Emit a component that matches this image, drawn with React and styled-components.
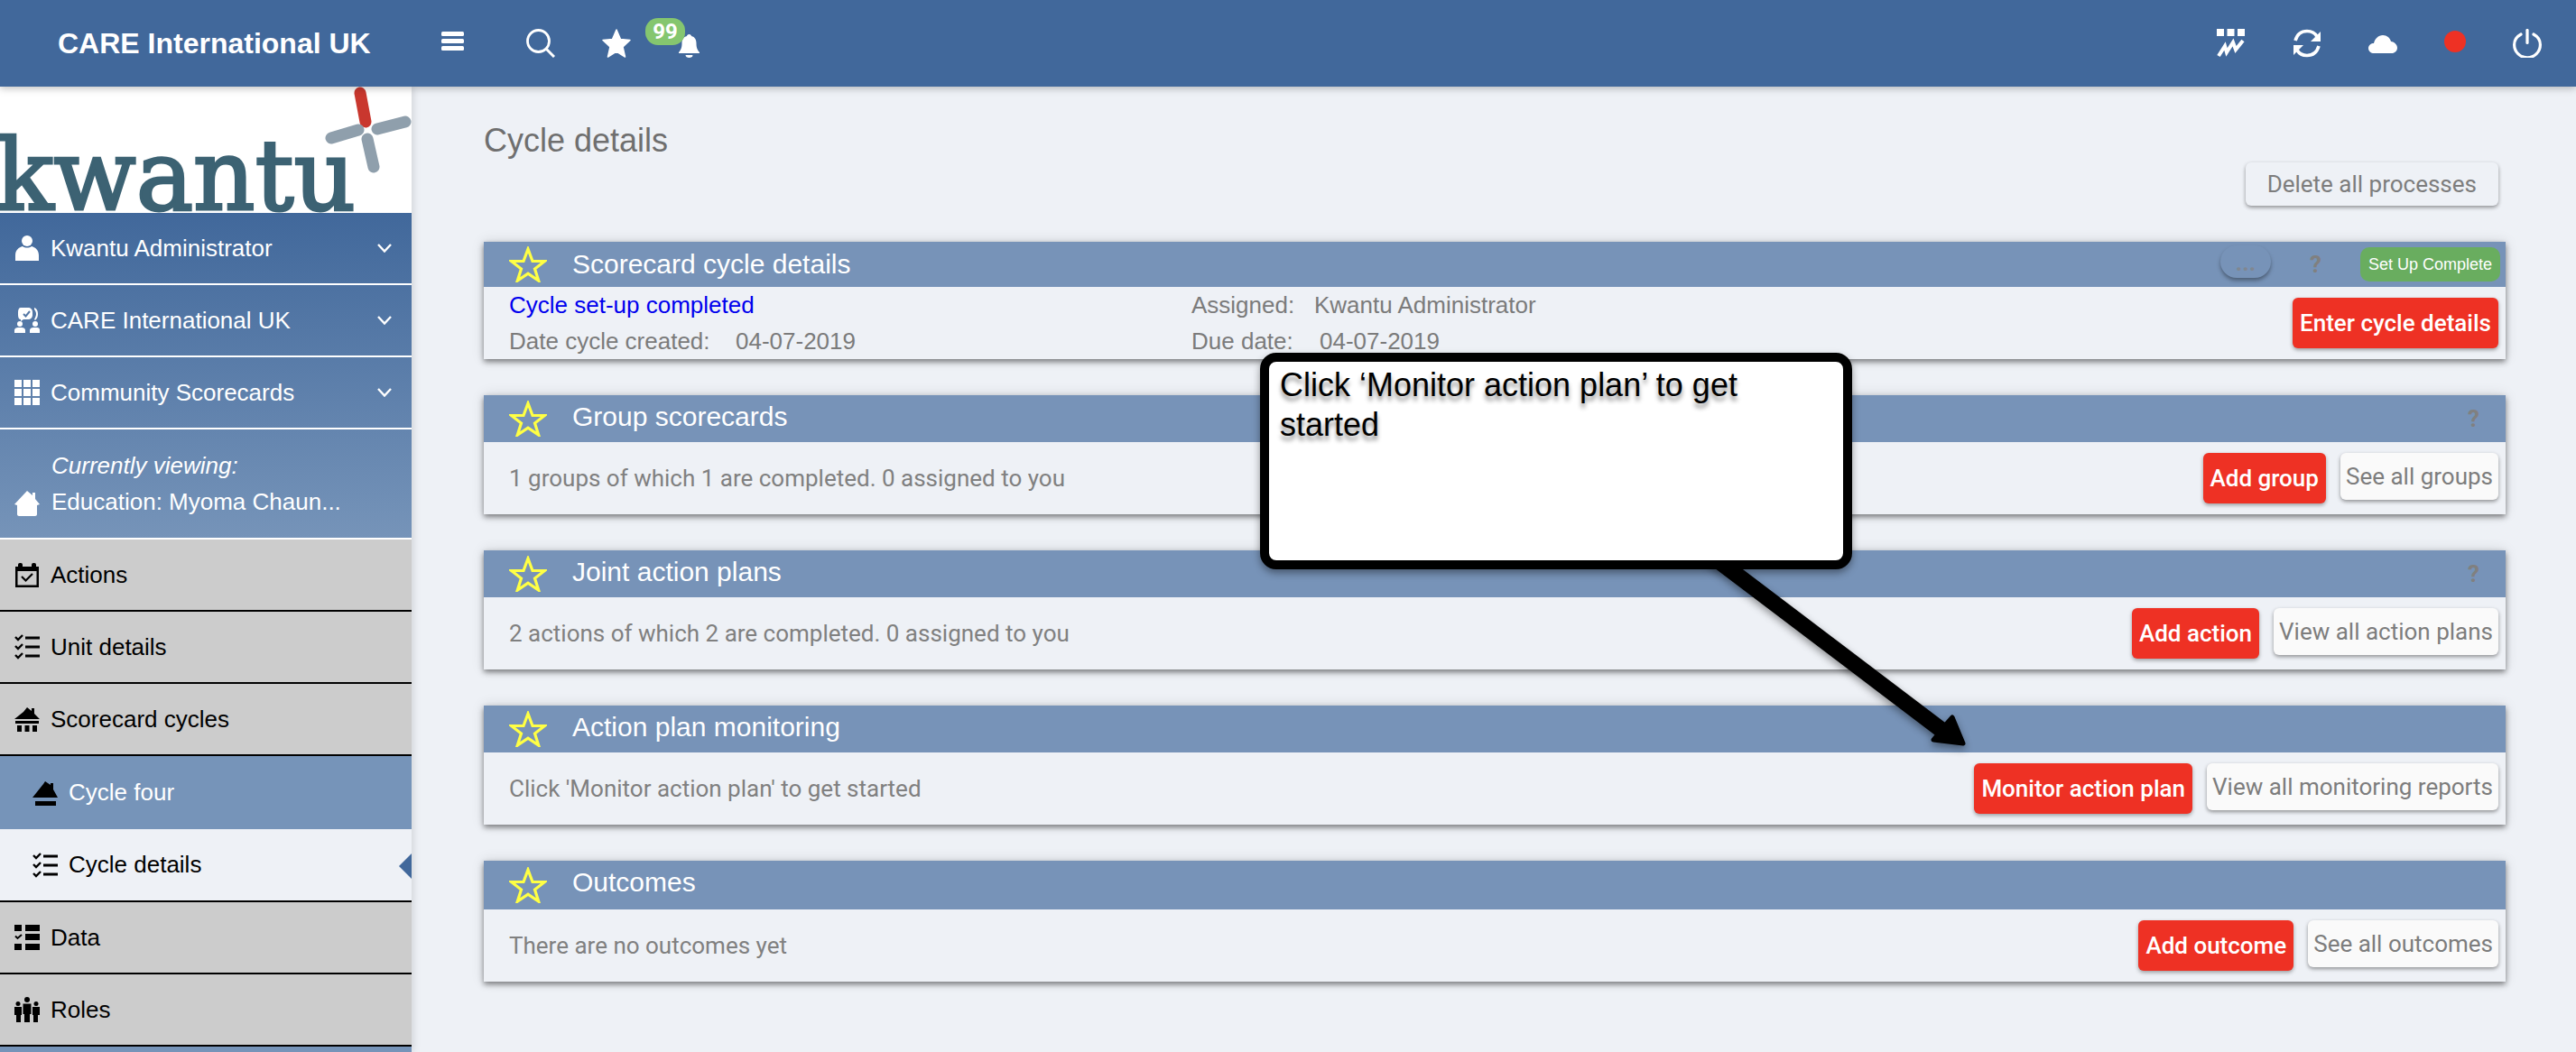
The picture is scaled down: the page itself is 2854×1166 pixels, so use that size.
import React from 'react';
import styled, { createGlobalStyle } from 'styled-components';

const Global = createGlobalStyle`
  html, body { margin: 0; padding: 0; background: #eef1f6; }
  body { font-family: "Liberation Sans", Arial, sans-serif; overflow: hidden; }
  * { box-sizing: border-box; }
`;

const Page = styled.div`
  position: relative;
  width: 2854px;
  height: 1166px;
  overflow: hidden;
  display: flex;
  flex-direction: column;
  background: #eef1f6;
`;

const TopBar = styled.header`
  position: relative;
  z-index: 3;
  flex: 0 0 96px;
  display: flex;
  align-items: center;
  background: #41689b;
  color: #fff;
  box-shadow: 0 2px 8px rgba(0, 0, 0, 0.25);
`;
const Brand = styled.div`
  width: 426px;
  padding-left: 64px;
  font-size: 32px;
  font-weight: 700;
  white-space: nowrap;
`;
const TopLeft = styled.div`
  display: flex;
  align-items: center;
  padding-left: 63px;
`;
const TopGlyph = styled.span`
  display: flex;
  margin-right: ${(p) => p.$gap}px;
  margin-top: ${(p) => p.$top || 0}px;
`;
const BellWrap = styled.span`
  position: relative;
  display: flex;
  margin-top: 6px;
  margin-left: 53px;
`;
const Badge = styled.span`
  position: absolute;
  left: -37px;
  top: -18px;
  width: 44px;
  height: 30px;
  border-radius: 14px;
  background: #85c66f;
  color: #fff;
  font: 700 24px/30px Roboto, sans-serif;
  text-align: center;
`;
const TopRight = styled.div`
  margin-left: auto;
  display: flex;
  align-items: center;
  padding-right: 38px;
`;
const RecDot = styled.span`
  display: block;
  width: 24px;
  height: 24px;
  border-radius: 50%;
  background: #ee3124;
  margin: -4px 52px 0 52px;
`;

const Body = styled.div`
  flex: 1;
  display: flex;
  min-height: 0;
`;

const Sidebar = styled.aside`
  position: relative;
  z-index: 2;
  flex: 0 0 456px;
  background: #cccccc;
  box-shadow: 2px 0 8px rgba(0, 0, 0, 0.12);
`;
const LogoBox = styled.div`
  height: 140px;
  background: #fff;
  overflow: hidden;
`;
const BlueGroup = styled.div`
  background: linear-gradient(180deg, #41689b 0%, #7694b9 100%);
`;
const NavRow = styled.div`
  display: flex;
  align-items: center;
  height: ${(p) => p.$h || 80}px;
  padding-left: ${(p) => (p.$sub ? 36 : 16)}px;
  padding-right: 22px;
  gap: 12px;
  font-size: 26px;
  white-space: nowrap;
  color: ${(p) => (p.$light ? '#fff' : '#000')};
  background: ${(p) => p.$bg || 'transparent'};
  border-bottom: ${(p) => (p.$line ? `2px solid ${p.$line}` : 'none')};
  position: relative;
`;
const NavIcon = styled.span`
  flex: 0 0 28px;
  display: flex;
  color: ${(p) => (p.$light ? '#fff' : '#000')};
`;
const NavLabel = styled.span`
  flex: 1;
`;
const ViewRow = styled.div`
  display: flex;
  align-items: flex-end;
  height: 122px;
  padding: 0 0 24px 16px;
  gap: 13px;
  color: #fff;
  font-size: 26px;
  border-bottom: 2px solid #fff;
`;
const ViewText = styled.div`
  display: flex;
  flex-direction: column;
  line-height: 40px;
  white-space: nowrap;
  margin-bottom: -4px;
`;
const ViewHint = styled.em`
  font-style: italic;
`;
const ActiveMark = styled.span`
  position: absolute;
  right: 0;
  top: 27px;
  width: 0;
  height: 0;
  border-style: solid;
  border-width: 14px 14px 14px 0;
  border-color: transparent #41689b transparent transparent;
`;
const SidebarTail = styled.div`
  height: 8px;
  background: #7694b9;
`;

const Main = styled.main`
  flex: 1;
  min-width: 0;
  padding: 38px 78px 0 80px;
  display: flex;
  flex-direction: column;
`;
const Title = styled.h1`
  margin: 0;
  font-size: 36px;
  font-weight: 400;
  line-height: 44px;
  color: #6f6f6f;
`;
const PageActions = styled.div`
  display: flex;
  justify-content: flex-end;
  padding-right: 8px;
  margin: 2px 0 40px;
`;
const GhostBtn = styled.button`
  height: ${(p) => p.$h || 52}px;
  padding: 0 ${(p) => p.$pad || 6}px;
  border: 0;
  border-radius: 6px;
  background: ${(p) => p.$bg || '#fafafa'};
  color: #7d7d7d;
  font: 400 26px Roboto, sans-serif;
  white-space: nowrap;
  box-shadow: 0 2px 4px rgba(0, 0, 0, 0.4);
`;
const RedBtn = styled.button`
  height: 56px;
  padding: 0 8px;
  border: 0;
  border-radius: 6px;
  background: #ee3124;
  color: #fff;
  font: 500 26px Roboto, sans-serif;
  white-space: nowrap;
  box-shadow: 0 2px 4px rgba(0, 0, 0, 0.35);
`;

const Cards = styled.div`
  display: flex;
  flex-direction: column;
  gap: 40px;
`;
const Card = styled.section`
  background: #eef1f6;
  box-shadow: 0 3px 6px rgba(0, 0, 0, 0.45), 0 0 14px rgba(0, 0, 0, 0.12);
`;
const CardHead = styled.div`
  height: ${(p) => p.$h}px;
  display: flex;
  align-items: center;
  background: #7793b8;
  color: #fff;
  padding-left: 28px;
  font-size: 30px;
`;
const CardTitle = styled.span`
  margin-left: 28px;
  margin-bottom: ${(p) => p.$lift || 0}px;
  white-space: nowrap;
`;
const HeadRight = styled.div`
  margin-left: auto;
  display: flex;
  align-items: center;
`;
const MoreBtn = styled.span`
  width: 56px;
  height: 36px;
  border-radius: 18px;
  background: #7793b8;
  color: #808791;
  font: 700 26px/38px Roboto, sans-serif;
  text-align: center;
  box-shadow: 0 3px 4px rgba(0, 0, 0, 0.35);
  margin-right: 43px;
  margin-top: -6px;
`;
const Help = styled.span`
  color: #808080;
  font: 700 26px Roboto, sans-serif;
  margin-right: ${(p) => p.$mr}px;
`;
const StatusPill = styled.span`
  height: 38px;
  border-radius: 10px;
  background: #69ad5f;
  color: #fff;
  font-size: 18px;
  line-height: 38px;
  padding: 0 9px;
  margin-right: 6px;
  white-space: nowrap;
`;
const CardBody = styled.div`
  height: 80px;
  display: flex;
  align-items: center;
  padding: 0 8px 0 28px;
`;
const Summary = styled.div`
  flex: 1;
  font: 400 26px Roboto, sans-serif;
  color: #808080;
  white-space: nowrap;
`;
const BtnRow = styled.div`
  display: flex;
  align-items: flex-start;
  gap: 16px;
  align-self: flex-start;
  padding-top: 12px;
`;
const InfoGrid = styled.div`
  flex: 1;
  display: grid;
  grid-template-columns: 756px 1fr;
  grid-auto-rows: 40px;
  align-items: center;
  font-size: 26px;
  color: #7b7b7b;
  white-space: nowrap;
`;
const Done = styled.span`
  color: #0000ee;
`;
const Pair = styled.span`
  display: flex;
`;
const PairLabel = styled.span`
  width: ${(p) => p.$w}px;
`;

const CalloutArrow = styled.svg`
  position: absolute;
  left: 1880px;
  top: 610px;
  z-index: 4;
  filter: drop-shadow(0 4px 4px rgba(0, 0, 0, 0.4));
`;
const Callout = styled.div`
  position: absolute;
  left: 1396px;
  top: 391px;
  z-index: 5;
  width: 656px;
  height: 240px;
  padding: 4px 24px 4px 12px;
  background: #fff;
  border: 10px solid #000;
  border-radius: 18px;
  font-size: 36px;
  line-height: 44px;
  color: #000;
  text-shadow: 0 5px 5px rgba(0, 0, 0, 0.45);
  box-shadow: 0 4px 8px rgba(0, 0, 0, 0.4);
`;

const Svg = ({ w = 28, h = 28, children, fill = 'currentColor', ...rest }) => (
  <svg width={w} height={h} viewBox={`0 0 ${w} ${h}`} fill={fill} {...rest}>{children}</svg>
);

const Chevron = () => (
  <svg width="16" height="10" viewBox="0 0 16 10" fill="none" stroke="#fff" strokeWidth="2.4"><path d="M1 1l7 7.5L15 1" /></svg>
);
const StarOutline = () => (
  <svg width="42" height="40" viewBox="0 0 42 40" fill="none" stroke="#ffff44" strokeWidth="3.2">
    <path d="M21 3l5 13.5h13.5l-11 8.6 4.2 13-11.7-8-11.7 8 4.2-13-11-8.6H16z" />
  </svg>
);
const PersonIcon = () => (
  <Svg><circle cx="14" cy="6" r="6" /><path d="M1 28v-6c0-6 4-9 8-10 3 2 7 2 10 0 4 1 8 4 8 10v6z" /></Svg>
);
const CareIcon = () => (
  <Svg>
    <path d="M7 0h8c3 0 5 2 5 5v3c0 3-2 5-5 5H10l-3 2v-2c-2 0-3-2-3-5V5c0-3 1-5 3-5z" />
    <path d="M10 7l2.5 2.5L17 4" fill="none" stroke="#5578a5" strokeWidth="2" />
    <path d="M22 0c3 1 4 4 4 7s-1 5-3 7l-1-1c1-2 2-4 2-6s-1-4-2-5z" />
    <circle cx="6" cy="18" r="3" /><path d="M0 28v-3c0-2 2-3 4-3h4c2 0 4 1 4 3v3z" />
    <circle cx="23" cy="18" r="3" /><path d="M17 28v-3c0-2 2-3 4-3h4c2 0 3 1 3 3v3z" />
  </Svg>
);
const GridIcon = () => (
  <Svg>
    {[0, 10, 20].map((y) => [0, 10, 20].map((x) => <rect key={`${x}-${y}`} x={x} y={y} width="8" height="8" />))}
  </Svg>
);
const HomeIcon = () => (
  <Svg><path d="M0 15L14 0l6 5V2h3v7l5 6-3 1v10c0 1-1 2-2 2H5c-1 0-2-1-2-2V16z" /></Svg>
);
const CalendarIcon = () => (
  <Svg>
    <path d="M1 5h26v23H1zM3.500 10v15.500h21V10z" fillRule="evenodd" />
    <rect x="4" y="1" width="5" height="6" rx="2" /><rect x="19" y="1" width="5" height="6" rx="2" />
    <path d="M8 16l4.500 4.500L20 13" fill="none" stroke="currentColor" strokeWidth="2.200" />
  </Svg>
);
const ChecklistIcon = () => (
  <Svg fill="none" stroke="currentColor">
    <path d="M1 3l3 3 5-5M1 13l3 3 5-5M1 23l3 3 5-5" strokeWidth="2.400" />
    <path d="M12 4h16M12 14h16M12 24h16" strokeWidth="3.200" />
  </Svg>
);
const HutIcon = () => (
  <Svg>
    <path d="M0 14L10 6l4-5 5 4V2h3v6l6 6z" />
    <rect x="1" y="16" width="26" height="3" />
    <rect x="3" y="21" width="5" height="7" /><rect x="11.500" y="21" width="5" height="7" /><rect x="20" y="21" width="5" height="7" />
  </Svg>
);
const RoofIcon = () => (
  <Svg>
    <path d="M0 19L12 4l2-3 6 4V3h3v7l5 9z" />
    <rect x="3" y="23" width="23" height="5" />
  </Svg>
);
const DataIcon = () => (
  <Svg>
    <rect x="0" y="0" width="8" height="7" /><rect x="12" y="0" width="16" height="7" />
    <rect x="12" y="10" width="16" height="7" /><rect x="0" y="21" width="8" height="7" /><rect x="12" y="21" width="16" height="7" />
    <path d="M1 12.500l2.500 2.500L8 11" fill="none" stroke="currentColor" strokeWidth="2" />
  </Svg>
);
const RolesIcon = () => (
  <Svg>
    <circle cx="4" cy="7.500" r="2.500" /><path d="M0 11h8v9H7v8H2v-8H0z" />
    <circle cx="14" cy="3" r="3" /><path d="M9.500 7.500h9V19H17v9h-6v-9H9.500z" />
    <circle cx="24" cy="7.500" r="2.500" /><path d="M20 11h8v9h-2v8h-5v-8h-1z" />
  </Svg>
);

const Hamburger = () => (
  <Svg w={25} h={21} fill="#fff">
    <rect y="0" width="25" height="5" rx="1.500" /><rect y="8" width="25" height="5" rx="1.500" /><rect y="16" width="25" height="5" rx="1.500" />
  </Svg>
);
const SearchIcon = () => (
  <Svg w={32} h={32} fill="none" stroke="#fff">
    <circle cx="13.500" cy="13.500" r="12" strokeWidth="2.800" /><path d="M22 22l9 9" strokeWidth="3" />
  </Svg>
);
const SolidStar = () => (
  <Svg w={32} h={32} fill="#fff" stroke="#fff" strokeWidth="1.500" strokeLinejoin="round">
    <path d="M16 1l4.500 10.500L31 12.500l-8 7.500 2.500 11L16 25l-9.500 6L9 20l-8-7.500 10.500-1z" />
  </Svg>
);
const BellIcon = () => (
  <Svg w={23} h={26} fill="#fff">
    <path d="M11.500 0c1.500 0 2.500 1 2.500 2 4 1 5.500 4 5.500 8 0 5 1 7 3.500 10v1H0v-1c2.500-3 3.500-5 3.500-10 0-4 1.500-7 5.500-8 0-1 1-2 2.500-2z" />
    <path d="M7.500 23h8c0 2-2 3-4 3s-4-1-4-3z" />
  </Svg>
);
const ChartIcon = () => (
  <Svg w={31} h={32} fill="#fff">
    <rect x="0" y="0" width="8" height="8" /><rect x="11.500" y="0" width="8" height="8" /><rect x="23" y="0" width="8" height="8" />
    <path d="M2 30l7-11 2 7 7-11 3 8 8-10" fill="none" stroke="#fff" strokeWidth="4" />
  </Svg>
);
const SyncIcon = () => (
  <Svg w={32} h={32} fill="#fff">
    <path d="M3 13C5 6 10 2.500 16 2.500c5 0 9 2.500 11 6" fill="none" stroke="#fff" strokeWidth="3.600" />
    <path d="M31 3v11H20z" />
    <path d="M29 19c-2 7-7 10.500-13 10.500-5 0-9-2.500-11-6" fill="none" stroke="#fff" strokeWidth="3.600" />
    <path d="M1 29V18h11z" />
  </Svg>
);
const CloudIcon = () => (
  <Svg w={32} h={20} fill="#fff">
    <path d="M6 20c-3 0-6-2-6-5.500C0 11 3 9 6 9c1-5 5-9 10-9 4.500 0 8 3 9 7 4 .5 7 3.500 7 7 0 3.500-3 6-6 6z" />
  </Svg>
);
const PowerIcon = () => (
  <Svg w={32} h={32} fill="none" stroke="#fff" strokeWidth="3.200" strokeLinecap="round">
    <path d="M9 6C4.500 8.500 1.600 13 1.600 17.500a14.400 14.400 0 0 0 28.800 0C30.400 13 27.500 8.500 23 6" />
    <path d="M16 1.500v14" />
  </Svg>
);

const KwantuLogo = () => (
  <svg width="456" height="140" viewBox="0 0 456 140" role="img" aria-label="kwantu logo">
    <text x="-5" y="136" fontFamily="DejaVu Serif, serif" fontSize="108" fill="#3c6273" stroke="#3c6273" strokeWidth="3" textLength="399" lengthAdjust="spacingAndGlyphs">kwantu</text>
    <g fill="none" strokeLinecap="round" strokeWidth="13">
      <path d="M399 7l6 32" stroke="#c9372e" />
      <path d="M367 57l30-9M418 47l31-8M407 58l7 31" stroke="#8f9fac" />
    </g>
  </svg>
);

const cards = [
  { title: 'Group scorecards', h: 52, lift: 4, help: true, text: '1 groups of which 1 are completed. 0 assigned to you', red: 'Add group', ghost: 'See all groups' },
  { title: 'Joint action plans', h: 52, lift: 4, help: true, text: '2 actions of which 2 are completed. 0 assigned to you', red: 'Add action', ghost: 'View all action plans' },
  { title: 'Action plan monitoring', h: 52, lift: 4, text: "Click 'Monitor action plan' to get started", red: 'Monitor action plan', ghost: 'View all monitoring reports' },
  { title: 'Outcomes', h: 54, lift: 6, text: 'There are no outcomes yet', red: 'Add outcome', ghost: 'See all outcomes' },
];

export default function App() {
  return (
    <Page>
      <Global />
      <TopBar>
        <Brand>CARE International UK</Brand>
        <TopLeft>
          <TopGlyph $gap={69} $top={-5}><Hamburger /></TopGlyph>
          <TopGlyph $gap={52}><SearchIcon /></TopGlyph>
          <TopGlyph $gap={0}><SolidStar /></TopGlyph>
          <BellWrap>
            <Badge>99</Badge>
            <BellIcon />
          </BellWrap>
        </TopLeft>
        <TopRight>
          <TopGlyph $gap={53}><ChartIcon /></TopGlyph>
          <TopGlyph $gap={52}><SyncIcon /></TopGlyph>
          <TopGlyph $gap={0} $top={1}><CloudIcon /></TopGlyph>
          <RecDot />
          <PowerIcon />
        </TopRight>
      </TopBar>
      <Body>
        <Sidebar>
          <LogoBox><KwantuLogo /></LogoBox>
          <BlueGroup>
            <NavRow $light $line="#fff"><NavIcon $light><PersonIcon /></NavIcon><NavLabel>Kwantu Administrator</NavLabel><Chevron /></NavRow>
            <NavRow $light $line="#fff"><NavIcon $light><CareIcon /></NavIcon><NavLabel>CARE International UK</NavLabel><Chevron /></NavRow>
            <NavRow $light $line="#fff"><NavIcon $light><GridIcon /></NavIcon><NavLabel>Community Scorecards</NavLabel><Chevron /></NavRow>
            <ViewRow>
              <NavIcon $light><HomeIcon /></NavIcon>
              <ViewText>
                <ViewHint>Currently viewing:</ViewHint>
                <span>Education: Myoma Chaun...</span>
              </ViewText>
            </ViewRow>
          </BlueGroup>
          <NavRow $line="#000"><NavIcon><CalendarIcon /></NavIcon><NavLabel>Actions</NavLabel></NavRow>
          <NavRow $line="#000"><NavIcon><ChecklistIcon /></NavIcon><NavLabel>Unit details</NavLabel></NavRow>
          <NavRow $line="#000"><NavIcon><HutIcon /></NavIcon><NavLabel>Scorecard cycles</NavLabel></NavRow>
          <NavRow $sub $light $bg="#7694b9" $h={81}><NavIcon><RoofIcon /></NavIcon><NavLabel>Cycle four</NavLabel></NavRow>
          <NavRow $sub $bg="#eef1f6" $line="#000" $h={81}><NavIcon><ChecklistIcon /></NavIcon><NavLabel>Cycle details</NavLabel><ActiveMark /></NavRow>
          <NavRow $line="#000"><NavIcon><DataIcon /></NavIcon><NavLabel>Data</NavLabel></NavRow>
          <NavRow $line="#000"><NavIcon><RolesIcon /></NavIcon><NavLabel>Roles</NavLabel></NavRow>
          <SidebarTail />
        </Sidebar>
        <Main>
          <Title>Cycle details</Title>
          <PageActions>
            <GhostBtn $h={48} $pad={24} $bg="#eef1f6">Delete all processes</GhostBtn>
          </PageActions>
          <Cards>
            <Card>
              <CardHead $h={50}>
                <StarOutline />
                <CardTitle>Scorecard cycle details</CardTitle>
                <HeadRight>
                  <MoreBtn>...</MoreBtn>
                  <Help $mr={43}>?</Help>
                  <StatusPill>Set Up Complete</StatusPill>
                </HeadRight>
              </CardHead>
              <CardBody>
                <InfoGrid>
                  <Done>Cycle set-up completed</Done>
                  <Pair><PairLabel $w={136}>Assigned:</PairLabel>Kwantu Administrator</Pair>
                  <Pair><PairLabel $w={251}>Date cycle created:</PairLabel>04-07-2019</Pair>
                  <Pair><PairLabel $w={142}>Due date:</PairLabel>04-07-2019</Pair>
                </InfoGrid>
                <BtnRow><RedBtn>Enter cycle details</RedBtn></BtnRow>
              </CardBody>
            </Card>
            {cards.map((c) => (
              <Card key={c.title}>
                <CardHead $h={c.h}>
                  <StarOutline />
                  <CardTitle $lift={c.lift}>{c.title}</CardTitle>
                  {c.help && <HeadRight><Help $mr={29}>?</Help></HeadRight>}
                </CardHead>
                <CardBody>
                  <Summary>{c.text}</Summary>
                  <BtnRow>
                    <RedBtn>{c.red}</RedBtn>
                    <GhostBtn>{c.ghost}</GhostBtn>
                  </BtnRow>
                </CardBody>
              </Card>
            ))}
          </Cards>
        </Main>
      </Body>
      <CalloutArrow width="320" height="240" viewBox="0 0 320 240">
        <path d="M23 3L275 194 283 185 295 214 262 210 267 204 15 13z" fill="#000" stroke="#000" strokeWidth="5" strokeLinejoin="round" />
      </CalloutArrow>
      <Callout>Click ‘Monitor action plan’ to get started</Callout>
    </Page>
  );
}
